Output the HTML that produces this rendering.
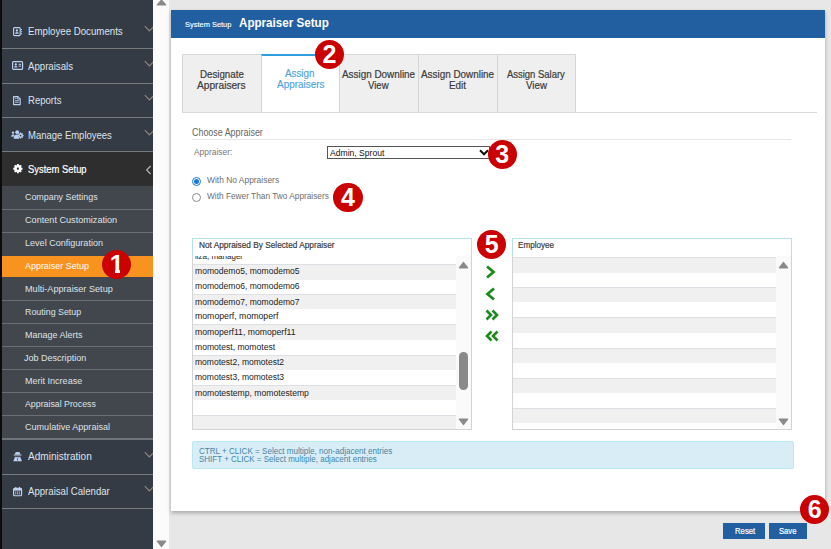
<!DOCTYPE html>
<html><head><meta charset="utf-8"><title>Appraiser Setup</title>
<style>
html,body{margin:0;padding:0;}
body{width:831px;height:549px;position:relative;overflow:hidden;background:#e7e7e7;font-family:"Liberation Sans",sans-serif;}
.abs{position:absolute;}
.tx{position:absolute;white-space:nowrap;line-height:1;transform-origin:0 50%;font-family:"Liberation Sans",sans-serif;}
.badge{position:absolute;width:29.4px;height:29.4px;border-radius:50%;background:#cb0000;color:#fff;font-weight:bold;font-size:25px;line-height:29.4px;text-align:center;font-family:"Liberation Sans",sans-serif;}
</style></head><body>
<div class="abs" style="left:0;top:0;width:2px;height:549px;background:#0c0c0c"></div>
<div class="abs" style="left:2px;top:0;width:151.3px;height:549px;background:#353b45;overflow:hidden">
<div class="abs" style="left:0;top:151px;width:152px;height:35px;background:#2e2e2e"></div>
<div class="abs" style="left:0;top:186px;width:152px;height:253px;background:#42474e"></div>
<div class="abs" style="left:0;top:255.5px;width:152px;height:21.7px;background:#f8931f"></div>
<div class="abs" style="left:0;top:48px;width:152px;height:1px;background:#77797c"></div>
<div class="abs" style="left:0;top:83px;width:152px;height:1px;background:#77797c"></div>
<div class="abs" style="left:0;top:117px;width:152px;height:1px;background:#77797c"></div>
<div class="abs" style="left:0;top:151px;width:152px;height:1px;background:#77797c"></div>
<div class="abs" style="left:0;top:474px;width:152px;height:1px;background:#77797c"></div>
<div class="abs" style="left:0;top:508px;width:152px;height:1px;background:#77797c"></div>
<div class="abs" style="left:0;top:209px;width:152px;height:1px;background:#6b6f75"></div>
<div class="abs" style="left:0;top:232px;width:152px;height:1px;background:#6b6f75"></div>
<div class="abs" style="left:0;top:300px;width:152px;height:1px;background:#6b6f75"></div>
<div class="abs" style="left:0;top:323px;width:152px;height:1px;background:#6b6f75"></div>
<div class="abs" style="left:0;top:346px;width:152px;height:1px;background:#6b6f75"></div>
<div class="abs" style="left:0;top:369px;width:152px;height:1px;background:#6b6f75"></div>
<div class="abs" style="left:0;top:392px;width:152px;height:1px;background:#6b6f75"></div>
<div class="abs" style="left:0;top:415px;width:152px;height:1px;background:#6b6f75"></div>
<div class="abs" style="left:0;top:438px;width:152px;height:2px;background:#6f7276"></div>
<svg class="abs" style="left:142px;top:25.4px" width="10" height="8" viewBox="0 0 10 8"><path d="M0.8 1.2 L5.4 5.9 L10 1.2" fill="none" stroke="#90897d" stroke-width="1.05"/></svg>
<svg class="abs" style="left:142px;top:59.6px" width="10" height="8" viewBox="0 0 10 8"><path d="M0.8 1.2 L5.4 5.9 L10 1.2" fill="none" stroke="#90897d" stroke-width="1.05"/></svg>
<svg class="abs" style="left:142px;top:94.3px" width="10" height="8" viewBox="0 0 10 8"><path d="M0.8 1.2 L5.4 5.9 L10 1.2" fill="none" stroke="#90897d" stroke-width="1.05"/></svg>
<svg class="abs" style="left:142px;top:128.7px" width="10" height="8" viewBox="0 0 10 8"><path d="M0.8 1.2 L5.4 5.9 L10 1.2" fill="none" stroke="#90897d" stroke-width="1.05"/></svg>
<svg class="abs" style="left:142px;top:450.5px" width="10" height="8" viewBox="0 0 10 8"><path d="M0.8 1.2 L5.4 5.9 L10 1.2" fill="none" stroke="#90897d" stroke-width="1.05"/></svg>
<svg class="abs" style="left:142px;top:485.4px" width="10" height="8" viewBox="0 0 10 8"><path d="M0.8 1.2 L5.4 5.9 L10 1.2" fill="none" stroke="#90897d" stroke-width="1.05"/></svg>
<svg class="abs" style="left:143px;top:164.5px" width="8" height="10" viewBox="0 0 8 10"><path d="M5.6 1 L1.6 5 L5.6 9" fill="none" stroke="#b4b4b4" stroke-width="1.15"/></svg>
<svg class="abs" style="left:11.0px;top:27.0px;overflow:visible" width="9.2" height="9.2" viewBox="0 0 9.2 9.2"><rect x="0.6" y="0.6" width="6.6" height="8" rx="1" fill="none" stroke="#bcd2f2" stroke-width="1.15"/><circle cx="3.9" cy="3.5" r="1.15" fill="#bcd2f2"/><path d="M2 6.8 Q2 5 3.9 5 Q5.8 5 5.8 6.8 Z" fill="#bcd2f2"/><rect x="8" y="2" width="1" height="1.1" fill="#bcd2f2"/><rect x="8" y="4.1" width="1" height="1.1" fill="#bcd2f2"/><rect x="8" y="6.2" width="1" height="1.1" fill="#bcd2f2"/></svg>
<svg class="abs" style="left:9.6px;top:61.0px;overflow:visible" width="11.2" height="9" viewBox="0 0 11.2 9"><rect x="0.6" y="0.6" width="10" height="7.8" rx="1" fill="none" stroke="#bcd2f2" stroke-width="1.15"/><circle cx="3.8" cy="3.5" r="1.15" fill="#bcd2f2"/><path d="M2 6.6 Q2 4.9 3.8 4.9 Q5.6 4.9 5.6 6.6 Z" fill="#bcd2f2"/><rect x="6.6" y="2.8" width="2.6" height="1" fill="#bcd2f2"/><rect x="6.6" y="4.6" width="2.6" height="1" fill="#bcd2f2"/></svg>
<svg class="abs" style="left:11.1px;top:95.8px;overflow:visible" width="8" height="9.2" viewBox="0 0 8 9.2"><path d="M0.6 0.6 H4.9 L7.2 2.9 V8.6 H0.6 Z" fill="none" stroke="#bcd2f2" stroke-width="1.15" stroke-linejoin="round"/><path d="M4.6 0.8 V3.2 H7" fill="none" stroke="#bcd2f2" stroke-width="0.8"/><rect x="2" y="4.3" width="3.8" height="0.85" fill="#bcd2f2"/><rect x="2" y="5.8" width="3.8" height="0.85" fill="#bcd2f2"/><rect x="2" y="1.9" width="1.6" height="0.85" fill="#bcd2f2"/></svg>
<svg class="abs" style="left:9.3px;top:130.0px;overflow:visible" width="12.6" height="9" viewBox="0 0 12.6 9"><circle cx="6.2" cy="2.2" r="1.9" fill="#bcd2f2"/><path d="M2.6 8.8 Q2.6 4.6 6.2 4.6 Q8 4.6 8.4 8.8 Z" fill="#bcd2f2"/><circle cx="2" cy="2.6" r="1.2" fill="#bcd2f2"/><path d="M0.2 6.8 Q0.2 4.2 2 4.2 Q3.2 4.2 3.4 5.2 Q2.4 6 2.4 6.8 Z" fill="#bcd2f2"/><circle cx="9.6" cy="5.6" r="2.4" fill="#bcd2f2" stroke="#353b45" stroke-width="0.5"/><g stroke="#bcd2f2" stroke-width="1.2"><path d="M9.6 2.6V8.6M6.6 5.6H12.6M7.5 3.5L11.7 7.7M11.7 3.5L7.5 7.7"/></g><circle cx="9.6" cy="5.6" r="0.9" fill="#353b45"/></svg>
<svg class="abs" style="left:10.9px;top:451.8px;overflow:visible" width="9.2" height="9.4" viewBox="0 0 9.2 9.4"><path d="M2.6 0.3 Q4.6 -0.2 6.6 0.3 L7.4 2.6 H1.8 Z" fill="#bcd2f2"/><rect x="0.6" y="2.5" width="8" height="1" rx="0.5" fill="#bcd2f2"/><path d="M2 4.4 H7.2 L7.6 6 L9 9.2 H0.2 L1.6 6 Z" fill="#bcd2f2"/><rect x="2.3" y="4.3" width="4.6" height="0.9" fill="#353b45"/><rect x="4.2" y="6.4" width="0.8" height="2" fill="#353b45"/></svg>
<svg class="abs" style="left:10.9px;top:486.8px;overflow:visible" width="9.2" height="9.4" viewBox="0 0 9.2 9.4"><rect x="0.6" y="1.4" width="8" height="7.4" rx="1" fill="none" stroke="#bcd2f2" stroke-width="1.15"/><rect x="0.6" y="1.4" width="8" height="2.2" fill="#bcd2f2"/><rect x="2.2" y="0" width="1.1" height="1.8" fill="#bcd2f2"/><rect x="5.9" y="0" width="1.1" height="1.8" fill="#bcd2f2"/><g fill="#bcd2f2"><rect x="2.1" y="4.5" width="1.2" height="1"/><rect x="4" y="4.5" width="1.2" height="1"/><rect x="5.9" y="4.5" width="1.2" height="1"/><rect x="2.1" y="6.3" width="1.2" height="1"/><rect x="4" y="6.3" width="1.2" height="1"/><rect x="5.9" y="6.3" width="1.2" height="1"/></g></svg>
<svg class="abs" style="left:10.5px;top:163.8px;overflow:visible" width="9.8" height="9.4" viewBox="0 0 9.8 9.4"><circle cx="4.9" cy="4.7" r="3.6" fill="#ffffff"/><g stroke="#ffffff" stroke-width="1.9"><path d="M4.9 0.1V9.3M0.3 4.7H9.5M1.65 1.45L8.15 7.95M8.15 1.45L1.65 7.95"/></g><circle cx="4.9" cy="4.7" r="1.1" fill="#2e2e2e"/></svg>
</div>
<div class="abs" style="left:153.3px;top:0;width:15.8px;height:549px;background:#fbfbfb"></div>
<svg class="abs" style="left:156px;top:0" width="11" height="7" viewBox="0 0 11 7"><path d="M5.5 -1 L10.2 4.6 Q10.4 5.6 9.4 5.6 H1.6 Q0.6 5.6 0.8 4.6 Z" fill="#8a8a8a"/></svg>
<svg class="abs" style="left:156px;top:539.7px" width="11" height="8" viewBox="0 0 11 8"><path d="M5.5 7.4 L10.2 1.6 Q10.4 0.6 9.4 0.6 H1.6 Q0.6 0.6 0.8 1.6 Z" fill="#8a8a8a"/></svg>
<div class="abs" style="left:171px;top:10px;width:654px;height:501px;background:#fff;box-shadow:0 2px 4px rgba(0,0,0,.28)"></div>
<div class="abs" style="left:171px;top:10px;width:654px;height:27.5px;background:#225fa0"></div>
<div class="abs" style="left:182px;top:54px;width:80px;height:58.6px;box-sizing:border-box;border:1px solid #d6d6d6;background:#efefef"></div><div class="abs" style="left:339px;top:54px;width:80px;height:58.6px;box-sizing:border-box;border:1px solid #d6d6d6;background:#efefef"></div><div class="abs" style="left:418px;top:54px;width:80px;height:58.6px;box-sizing:border-box;border:1px solid #d6d6d6;background:#efefef"></div><div class="abs" style="left:497px;top:54px;width:79px;height:58.6px;box-sizing:border-box;border:1px solid #d6d6d6;background:#efefef"></div><div class="abs" style="left:261px;top:54px;width:79px;height:58px;box-sizing:border-box;border:1px solid #d4d4d4;border-top:2px solid #2f9fe0;border-bottom:none;background:#fff"></div><div class="abs" style="left:182px;top:111.6px;width:635px;height:1px;background:#d9d9d9"></div>
<div class="abs" style="left:192px;top:139px;width:599px;height:1px;background:#e6e6e6"></div>
<div class="abs" style="left:327px;top:146.4px;width:163px;height:12.5px;box-sizing:border-box;border:1px solid #555;background:#fff"></div>
<svg class="abs" style="left:479px;top:147.5px" width="10" height="9" viewBox="0 0 10 9"><path d="M1 2.3 L5 6.3 L9 2.3" fill="none" stroke="#111" stroke-width="2"/></svg>
<div class="abs" style="left:192px;top:177.3px;width:9.2px;height:9.2px;box-sizing:border-box;border:1px solid #1479d6;border-radius:50%;background:#fff"></div>
<div class="abs" style="left:194.1px;top:179.4px;width:5px;height:5px;border-radius:50%;background:#1479d6"></div>
<div class="abs" style="left:192px;top:193.1px;width:9.2px;height:9.2px;box-sizing:border-box;border:1px solid #8c8c8c;border-radius:50%;background:#fff"></div>
<div class="abs" style="left:192px;top:238.2px;width:280px;height:18.5px;box-sizing:border-box;border:1px solid #b5e0f0;border-bottom-color:#cfcfcf;background:#fff"></div>
<div class="abs" style="left:512px;top:238.2px;width:280px;height:18.5px;box-sizing:border-box;border:1px solid #b5e0f0;border-bottom-color:#cfcfcf;background:#fff"></div>
<div class="abs" style="left:192px;top:256px;width:280px;height:174px;box-sizing:border-box;border:1px solid #d3d3d3;border-top:none;background:#fff;overflow:hidden"><div class="abs" style="left:0;top:8.0px;width:263px;height:15.6px;background:#f0f0f0;border-top:1px solid #dcdfe3;box-sizing:border-box"></div><div class="abs" style="left:0;top:37.7px;width:263px;height:15.6px;background:#f0f0f0;border-top:1px solid #dcdfe3;box-sizing:border-box"></div><div class="abs" style="left:0;top:68.0px;width:263px;height:15.6px;background:#f0f0f0;border-top:1px solid #dcdfe3;box-sizing:border-box"></div><div class="abs" style="left:0;top:98.5px;width:263px;height:15.6px;background:#f0f0f0;border-top:1px solid #dcdfe3;box-sizing:border-box"></div><div class="abs" style="left:0;top:128.7px;width:263px;height:15.6px;background:#f0f0f0;border-top:1px solid #dcdfe3;box-sizing:border-box"></div><div class="abs" style="left:0;top:158.8px;width:263px;height:15.6px;background:#f0f0f0;border-top:1px solid #dcdfe3;box-sizing:border-box"></div><span class="tx" style="left:2.00px;top:-3.59px;font-size:9.2px;transform:scaleX(0.8703);color:#222;">liza, manager</span><span class="tx" style="left:2.00px;top:10.81px;font-size:9.2px;transform:scaleX(0.9311);color:#222;">momodemo5, momodemo5</span><span class="tx" style="left:2.00px;top:26.21px;font-size:9.2px;transform:scaleX(0.9311);color:#222;">momodemo6, momodemo6</span><span class="tx" style="left:2.00px;top:41.91px;font-size:9.2px;transform:scaleX(0.9311);color:#222;">momodemo7, momodemo7</span><span class="tx" style="left:2.00px;top:56.31px;font-size:9.2px;transform:scaleX(0.9496);color:#222;">momoperf, momoperf</span><span class="tx" style="left:2.00px;top:71.91px;font-size:9.2px;transform:scaleX(0.9410);color:#222;">momoperf11, momoperf11</span><span class="tx" style="left:2.00px;top:87.21px;font-size:9.2px;transform:scaleX(0.9338);color:#222;">momotest, momotest</span><span class="tx" style="left:2.00px;top:102.21px;font-size:9.2px;transform:scaleX(0.9281);color:#222;">momotest2, momotest2</span><span class="tx" style="left:2.00px;top:116.91px;font-size:9.2px;transform:scaleX(0.9281);color:#222;">momotest3, momotest3</span><span class="tx" style="left:2.00px;top:132.91px;font-size:9.2px;transform:scaleX(0.9372);color:#222;">momotestemp, momotestemp</span><div class="abs" style="left:263px;top:0;width:16px;height:174px;background:#fafafa"></div><svg class="abs" style="left:265px;top:5.2px" width="11" height="8" viewBox="0 0 11 8"><path d="M5.5 0.6 L10.2 6.4 Q10.4 7.4 9.4 7.4 H1.6 Q0.6 7.4 0.8 6.4 Z" fill="#8a8a8a"/></svg><svg class="abs" style="left:265px;top:161.5px" width="11" height="8" viewBox="0 0 11 8"><path d="M5.5 7.4 L10.2 1.6 Q10.4 0.6 9.4 0.6 H1.6 Q0.6 0.6 0.8 1.6 Z" fill="#8a8a8a"/></svg><div class="abs" style="left:266px;top:96px;width:8.8px;height:38px;border-radius:4.4px;background:#8a8a8a"></div></div><div class="abs" style="left:512px;top:256px;width:280px;height:174px;box-sizing:border-box;border:1px solid #d3d3d3;border-top:none;background:#fff;overflow:hidden"><div class="abs" style="left:0;top:1.0px;width:263px;height:15.6px;background:#f0f0f0;border-top:1px solid #dcdfe3;box-sizing:border-box"></div><div class="abs" style="left:0;top:30.7px;width:263px;height:15.6px;background:#f0f0f0;border-top:1px solid #dcdfe3;box-sizing:border-box"></div><div class="abs" style="left:0;top:61.0px;width:263px;height:15.6px;background:#f0f0f0;border-top:1px solid #dcdfe3;box-sizing:border-box"></div><div class="abs" style="left:0;top:91.5px;width:263px;height:15.6px;background:#f0f0f0;border-top:1px solid #dcdfe3;box-sizing:border-box"></div><div class="abs" style="left:0;top:121.7px;width:263px;height:15.6px;background:#f0f0f0;border-top:1px solid #dcdfe3;box-sizing:border-box"></div><div class="abs" style="left:0;top:151.8px;width:263px;height:15.6px;background:#f0f0f0;border-top:1px solid #dcdfe3;box-sizing:border-box"></div><div class="abs" style="left:263px;top:0;width:16px;height:174px;background:#fafafa"></div><svg class="abs" style="left:265px;top:5.2px" width="11" height="8" viewBox="0 0 11 8"><path d="M5.5 0.6 L10.2 6.4 Q10.4 7.4 9.4 7.4 H1.6 Q0.6 7.4 0.8 6.4 Z" fill="#8a8a8a"/></svg><svg class="abs" style="left:265px;top:161.5px" width="11" height="8" viewBox="0 0 11 8"><path d="M5.5 7.4 L10.2 1.6 Q10.4 0.6 9.4 0.6 H1.6 Q0.6 0.6 0.8 1.6 Z" fill="#8a8a8a"/></svg></div><svg class="abs" style="left:484px;top:264px" width="16" height="16" viewBox="0 0 16 16"><path d="M3 2.5 L9.5 8 L3 13.5" fill="none" stroke="#1d8a1d" stroke-width="2.8"/></svg><svg class="abs" style="left:484px;top:286px" width="16" height="16" viewBox="0 0 16 16"><path d="M10 2.5 L3.5 8 L10 13.5" fill="none" stroke="#1d8a1d" stroke-width="2.8"/></svg><svg class="abs" style="left:484px;top:307px" width="16" height="16" viewBox="0 0 16 16"><path d="M2.5 3.5 L7 8 L2.5 12.5 M8.5 3.5 L13 8 L8.5 12.5" fill="none" stroke="#1d8a1d" stroke-width="2.6"/></svg><svg class="abs" style="left:484px;top:328px" width="16" height="16" viewBox="0 0 16 16"><path d="M7.5 3.5 L3 8 L7.5 12.5 M13.5 3.5 L9 8 L13.5 12.5" fill="none" stroke="#1d8a1d" stroke-width="2.6"/></svg>
<div class="abs" style="left:192px;top:441px;width:602px;height:28px;box-sizing:border-box;border:1px solid #bce8f1;border-radius:2px;background:#d9edf7"></div>
<div class="abs" style="left:723px;top:523px;width:42px;height:16px;background:#225fa0"></div>
<div class="abs" style="left:769px;top:523px;width:38px;height:16px;background:#225fa0"></div>
<span class="tx" style="left:28.00px;top:27.31px;font-size:10.15px;transform:scaleX(0.9561);color:#dde3ea;">Employee Documents</span>
<span class="tx" style="left:28.00px;top:61.51px;font-size:10.15px;transform:scaleX(0.9518);color:#dde3ea;">Appraisals</span>
<span class="tx" style="left:28.00px;top:96.21px;font-size:10.15px;transform:scaleX(0.9421);color:#dde3ea;">Reports</span>
<span class="tx" style="left:28.00px;top:130.61px;font-size:10.15px;transform:scaleX(0.9363);color:#dde3ea;">Manage Employees</span>
<span class="tx" style="left:28.00px;top:164.61px;font-size:10.15px;transform:scaleX(0.9297);color:#ffffff;-webkit-text-stroke:0.2px #ffffff;">System Setup</span>
<span class="tx" style="left:28.00px;top:452.41px;font-size:10.15px;transform:scaleX(0.9944);color:#dde3ea;">Administration</span>
<span class="tx" style="left:28.00px;top:487.31px;font-size:10.15px;transform:scaleX(0.9498);color:#dde3ea;">Appraisal Calendar</span>
<span class="tx" style="left:25.00px;top:191.75px;font-size:9.75px;transform:scaleX(0.9112);color:#dfe2e6;">Company Settings</span>
<span class="tx" style="left:25.00px;top:214.75px;font-size:9.75px;transform:scaleX(0.9347);color:#dfe2e6;">Content Customization</span>
<span class="tx" style="left:25.00px;top:237.75px;font-size:9.75px;transform:scaleX(0.9284);color:#dfe2e6;">Level Configuration</span>
<span class="tx" style="left:25.00px;top:260.55px;font-size:9.75px;transform:scaleX(0.9153);color:#ffffff;">Appraiser Setup</span>
<span class="tx" style="left:25.00px;top:284.05px;font-size:9.75px;transform:scaleX(0.9365);color:#dfe2e6;">Multi-Appraiser Setup</span>
<span class="tx" style="left:25.00px;top:306.75px;font-size:9.75px;transform:scaleX(0.9094);color:#dfe2e6;">Routing Setup</span>
<span class="tx" style="left:25.00px;top:329.75px;font-size:9.75px;transform:scaleX(0.9209);color:#dfe2e6;">Manage Alerts</span>
<span class="tx" style="left:24.00px;top:352.75px;font-size:9.75px;transform:scaleX(0.9256);color:#dfe2e6;">Job Description</span>
<span class="tx" style="left:25.00px;top:375.75px;font-size:9.75px;transform:scaleX(0.9258);color:#dfe2e6;">Merit Increase</span>
<span class="tx" style="left:25.00px;top:398.75px;font-size:9.75px;transform:scaleX(0.9010);color:#dfe2e6;">Appraisal Process</span>
<span class="tx" style="left:25.00px;top:421.75px;font-size:9.75px;transform:scaleX(0.9280);color:#dfe2e6;">Cumulative Appraisal</span>
<span class="tx" style="left:184.60px;top:20.85px;font-size:7.5px;transform:scaleX(0.9935);color:#fff;-webkit-text-stroke:0.12px #fff;">System Setup</span>
<span class="tx" style="left:239.10px;top:16.98px;font-size:12.9px;transform:scaleX(0.9018);color:#fff;font-weight:bold;">Appraiser Setup</span>
<span class="tx" style="left:199.80px;top:69.57px;font-size:10.2px;transform:scaleX(0.9548);color:#3b3b3b;-webkit-text-stroke:0.2px #3b3b3b;">Designate</span>
<span class="tx" style="left:197.00px;top:80.57px;font-size:10.2px;transform:scaleX(0.9979);color:#3b3b3b;-webkit-text-stroke:0.2px #3b3b3b;">Appraisers</span>
<span class="tx" style="left:285.30px;top:68.57px;font-size:10.2px;transform:scaleX(0.9615);color:#4aa3df;-webkit-text-stroke:0.15px #4aa3df;">Assign</span>
<span class="tx" style="left:276.50px;top:79.57px;font-size:10.2px;transform:scaleX(0.9753);color:#4aa3df;-webkit-text-stroke:0.15px #4aa3df;">Appraisers</span>
<span class="tx" style="left:342.00px;top:69.77px;font-size:10.2px;transform:scaleX(0.9706);color:#3b3b3b;-webkit-text-stroke:0.2px #3b3b3b;">Assign Downline</span>
<span class="tx" style="left:368.00px;top:80.57px;font-size:10.2px;transform:scaleX(0.9404);color:#3b3b3b;-webkit-text-stroke:0.2px #3b3b3b;">View</span>
<span class="tx" style="left:420.90px;top:69.77px;font-size:10.2px;transform:scaleX(0.9706);color:#3b3b3b;-webkit-text-stroke:0.2px #3b3b3b;">Assign Downline</span>
<span class="tx" style="left:449.00px;top:80.57px;font-size:10.2px;transform:scaleX(0.9680);color:#3b3b3b;-webkit-text-stroke:0.2px #3b3b3b;">Edit</span>
<span class="tx" style="left:506.90px;top:69.77px;font-size:10.2px;transform:scaleX(0.9278);color:#3b3b3b;-webkit-text-stroke:0.2px #3b3b3b;">Assign Salary</span>
<span class="tx" style="left:525.50px;top:80.57px;font-size:10.2px;transform:scaleX(0.9586);color:#3b3b3b;-webkit-text-stroke:0.2px #3b3b3b;">View</span>
<span class="tx" style="left:192.30px;top:128.27px;font-size:10.2px;transform:scaleX(0.8742);color:#666;">Choose Appraiser</span>
<span class="tx" style="left:194.00px;top:148.15px;font-size:8.8px;transform:scaleX(0.9553);color:#777;">Appraiser:</span>
<span class="tx" style="left:329.60px;top:149.05px;font-size:8.8px;transform:scaleX(0.9758);color:#111;">Admin, Sprout</span>
<span class="tx" style="left:207.30px;top:176.35px;font-size:8.8px;transform:scaleX(0.9575);color:#6e6e6e;">With No Appraisers</span>
<span class="tx" style="left:207.30px;top:192.35px;font-size:8.8px;transform:scaleX(0.9431);color:#6e6e6e;">With Fewer Than Two Appraisers</span>
<span class="tx" style="left:198.80px;top:241.05px;font-size:8.8px;transform:scaleX(0.9399);color:#3c3c3c;-webkit-text-stroke:0.2px #3c3c3c;">Not Appraised By Selected Appraiser</span>
<span class="tx" style="left:518.40px;top:241.05px;font-size:8.8px;transform:scaleX(0.9227);color:#3c3c3c;-webkit-text-stroke:0.2px #3c3c3c;">Employee</span>
<span class="tx" style="left:198.80px;top:446.87px;font-size:8.3px;transform:scaleX(0.9740);color:#4585a3;">CTRL + CLICK = Select multiple, non-adjacent entries</span>
<span class="tx" style="left:198.80px;top:454.87px;font-size:8.3px;transform:scaleX(0.9641);color:#4585a3;">SHIFT + CLICK = Select multiple, adjacent entries</span>
<span class="tx" style="left:734.50px;top:526.95px;font-size:8.8px;transform:scaleX(0.8789);color:#fff;-webkit-text-stroke:0.2px #fff;">Reset</span>
<span class="tx" style="left:779.40px;top:526.95px;font-size:8.8px;transform:scaleX(0.8673);color:#fff;-webkit-text-stroke:0.2px #fff;">Save</span>
<div class="badge" style="left:101.9px;top:249.8px">1<i style="position:absolute;left:8px;top:19.9px;width:5.15px;height:4.6px;background:#cb0000"></i><i style="position:absolute;left:17.85px;top:19.9px;width:4.6px;height:4.6px;background:#cb0000"></i></div><div class="badge" style="left:314.8px;top:39.6px">2</div><div class="badge" style="left:487.6px;top:139.9px">3</div><div class="badge" style="left:333.3px;top:182.9px">4</div><div class="badge" style="left:476.9px;top:229.6px">5</div><div class="badge" style="left:800.1px;top:494.8px">6</div>
</body></html>
